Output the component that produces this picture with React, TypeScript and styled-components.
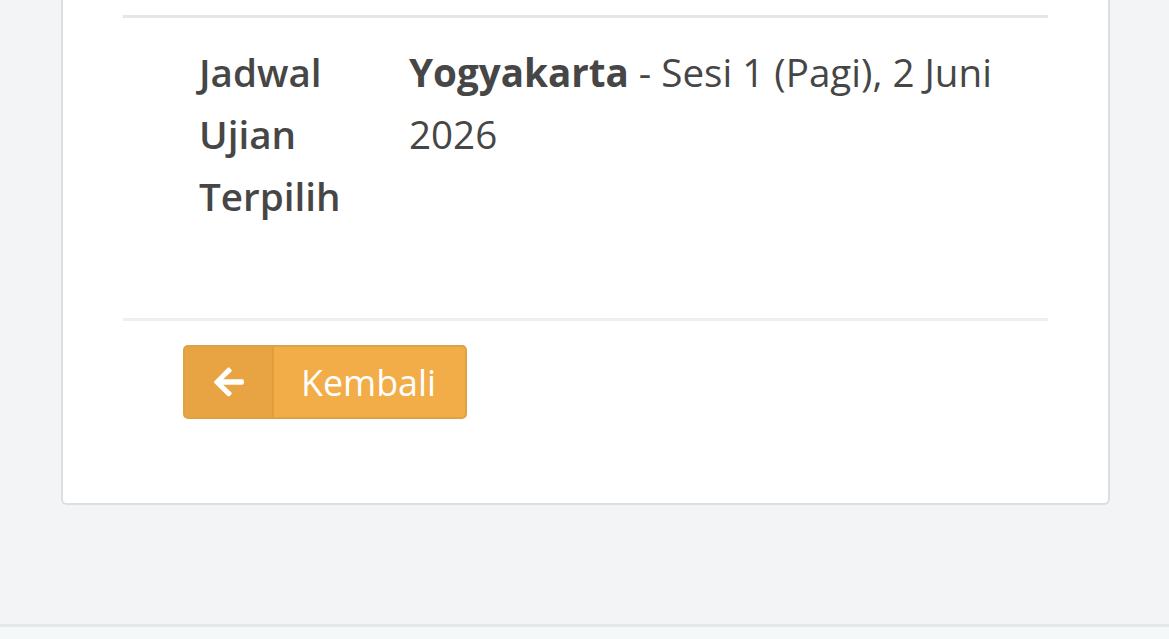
import React from "react";
import styled, { createGlobalStyle } from "styled-components";
import { FaArrowLeft } from "react-icons/fa";

const Global = createGlobalStyle`
  html, body { margin: 0; padding: 0; background: #f3f4f6; }
  body { font-family: "Open Sans", "Noto Sans", sans-serif; color: #464646; overflow: hidden; }
`;

const Page = styled.div`
  height: 639px;
  display: flex;
  flex-direction: column;
`;

const Main = styled.main`
  flex: 1;
  padding: 0 59px 0 61px;
`;

const Card = styled.section`
  background: #fff;
  border: 2px solid #dcdfe2;
  border-top: none;
  border-radius: 0 0 6px 6px;
  padding: 15px 60px 84px 60px;
`;

const Rule = styled.hr<{ $tone: string }>`
  border: none;
  height: 3px;
  margin: 0;
  background: ${(p) => p.$tone};
`;

const Row = styled.div`
  display: grid;
  grid-template-columns: 210px 1fr;
  padding: 23px 30px 91px 76px;
  font-size: 38.6px;
  line-height: 62px;
`;

const Label = styled.div`
  font-weight: 600;
  width: 150px;
`;

const Value = styled.div`
  font-weight: 400;
  strong { font-weight: 700; }
`;

const Actions = styled.div`
  padding: 24px 0 0 60px;
`;

const Button = styled.button`
  display: inline-flex;
  align-items: stretch;
  height: 74px;
  padding: 0;
  border: 2px solid #dea143;
  border-radius: 5px;
  background: #f2ad48;
  color: #fff;
  font-family: "Open Sans", "Noto Sans", sans-serif;
  font-size: 35.8px;
  overflow: hidden;
  cursor: pointer;
`;

const IconPart = styled.span`
  width: 87px;
  display: flex;
  align-items: center;
  justify-content: center;
  background: #e8a442;
  border-right: 2px solid #df9f3f;
  svg { width: 34px; height: 34px; }
`;

const TextPart = styled.span`
  display: flex;
  align-items: center;
  padding: 0 29px 0 27px;
`;

const Footer = styled.footer`
  height: 12px;
  border-top: 3px solid #e4e7ea;
  background: #f5f8f9;
`;

export default function App() {
  return (
    <Page>
      <Global />
      <Main>
        <Card>
          <Rule $tone="#e6e6e6" />
          <Row>
            <Label>Jadwal Ujian Terpilih</Label>
            <Value>
              <strong>Yogyakarta</strong> - Sesi 1 (Pagi), 2 Juni 2026
            </Value>
          </Row>
          <Rule $tone="#efefef" />
          <Actions>
            <Button>
              <IconPart>
                <FaArrowLeft />
              </IconPart>
              <TextPart>Kembali</TextPart>
            </Button>
          </Actions>
        </Card>
      </Main>
      <Footer />
    </Page>
  );
}
